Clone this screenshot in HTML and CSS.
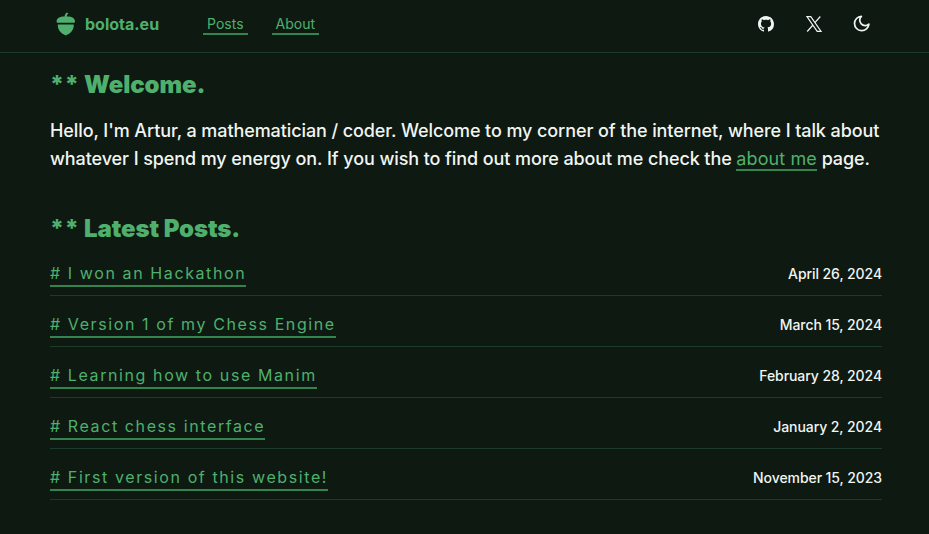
FILE: index.html
```html
<!DOCTYPE html>
<html lang="en">
<head>
<meta charset="utf-8">
<title>bolota.eu</title>
<link rel="stylesheet" href="styles.css">
</head>
<body>
<header class="header">
  <a class="brand" href="#">
    <svg class="acorn" viewBox="0 0 20 24"><path d="M8.600 4.500C8.700 2.800 9.500 1.400 10.900.500l1.500 1.100c-1 .8-1.600 1.700-1.800 2.800C15.800 4.200 19 6 19 9.500c0 .9-.5 1.300-1.300 1.300H1.900C1.100 10.800.6 10.400.6 9.500.6 6.200 3.700 4.500 8.600 4.500zM1.800 12.400h16c.2 5.500-3 8.800-8 11c-5-2.200-8.200-5.500-8-11z"/></svg>
    <span>bolota.eu</span>
  </a>
  <nav class="nav"><a class="link" href="#">Posts</a><a class="link" href="#">About</a></nav>
  <div class="icons">
    <svg viewBox="0 0 16 16" width="16" height="16"><path fill="currentColor" d="M8 0C3.580 0 0 3.580 0 8c0 3.540 2.290 6.530 5.470 7.590.4.070.55-.17.55-.38 0-.19-.01-.82-.01-1.490-2.010.37-2.530-.49-2.690-.94-.09-.23-.48-.94-.82-1.130-.28-.15-.68-.52-.01-.53.63-.01 1.080.58 1.230.82.72 1.210 1.870.87 2.330.66.07-.52.28-.87.51-1.070-1.780-.2-3.640-.89-3.640-3.950 0-.87.31-1.590.82-2.150-.08-.2-.36-1.020.08-2.120 0 0 .67-.21 2.200.82.64-.18 1.320-.27 2-.27s1.360.09 2 .27c1.530-1.040 2.200-.82 2.200-.82.44 1.100.16 1.920.08 2.120.51.56.82 1.270.82 2.150 0 3.070-1.870 3.750-3.650 3.950.29.25.54.73.54 1.480 0 1.070-.01 1.930-.01 2.200 0 .21.15.46.55.38A8.010 8.010 0 0 0 16 8c0-4.420-3.580-8-8-8z"/></svg>
    <svg viewBox="0 0 16 16" width="16" height="16" fill="none" stroke="currentColor" stroke-width="1.200"><path d="M.9.600h3.900L15.100 15.400h-3.900zM14.300.500 8.700 6.900M7 9 1.200 15.500"/></svg>
    <svg class="moon" viewBox="0 0 20 20" width="20" height="20" fill="none" stroke="currentColor" stroke-width="1.700" stroke-linejoin="round"><path d="M9.400 2.300A7.200 7.200 0 1 0 16.900 10.100A5.400 5.400 0 0 1 9.400 2.300z"/></svg>
  </div>
</header>
<main class="main">
  <h2><span class="stars">**</span> Welcome.</h2>
  <p class="intro">Hello, I'm Artur, a mathematician / coder. Welcome to my corner of the internet, where I talk about whatever I spend my energy on. If you wish to find out more about me check the <a class="link" href="#">about me</a> page.</p>
  <h2><span class="stars">**</span> Latest Posts.</h2>
  <ul class="posts">
    <li><a class="link" href="#"># I won an Hackathon</a><time>April 26, 2024</time></li>
    <li><a class="link" href="#"># Version 1 of my Chess Engine</a><time>March 15, 2024</time></li>
    <li><a class="link" href="#"># Learning how to use Manim</a><time>February 28, 2024</time></li>
    <li><a class="link" href="#"># React chess interface</a><time>January 2, 2024</time></li>
    <li><a class="link" href="#"># First version of this website!</a><time>November 15, 2023</time></li>
  </ul>
</main>
</body>
</html>
```
FILE: styles.css
```css
* { box-sizing: border-box; margin: 0; padding: 0; }
body { height: 534px; overflow: hidden; background: #0e1912; color: #f0f5f1; font-family: Inter, sans-serif; }
a { color: #4fb06d; text-decoration: none; }
.link { border-bottom: 2px solid #348450; }
.header { height: 53px; border-bottom: 1px solid #1e3b29; display: flex; align-items: center; padding: 0 57px 4px 56px; }
.brand { display: flex; align-items: center; gap: 9px; font-size: 16px; font-weight: 700; }
.acorn { width: 20px; height: 24px; fill: currentColor; }
.nav { display: flex; gap: 24px; margin-left: 44px; font-size: 14px; }
.nav .link { padding: 0 4px; line-height: 19px; }
.icons { margin-left: auto; display: flex; align-items: center; gap: 32px; }
.moon { margin-left: -2px; }
.main { padding: 14px 47px 0 50px; }
h2 { font-size: 24px; font-weight: 900; line-height: 36px; letter-spacing: -0.100px; color: #4fb06d; }
.stars { font-weight: 800; letter-spacing: 0.700px; }
.intro { font-size: 18px; font-weight: 500; letter-spacing: -0.093px; line-height: 28px; margin: 14px 0 38px; }
.intro .link { font-weight: 400; letter-spacing: 0.100px; }
.posts { list-style: none; margin-top: 15px; }
.posts li { display: flex; justify-content: space-between; align-items: flex-start; height: 51px; border-bottom: 1px solid #1e3b29; padding-top: 17px; }
.posts li:first-child { height: 34px; padding-top: 0; }
.posts .link { font-size: 16px; line-height: 23px; letter-spacing: 1.600px; }
time { font-size: 14px; font-weight: 500; line-height: 24px; letter-spacing: -0.080px; }
```
